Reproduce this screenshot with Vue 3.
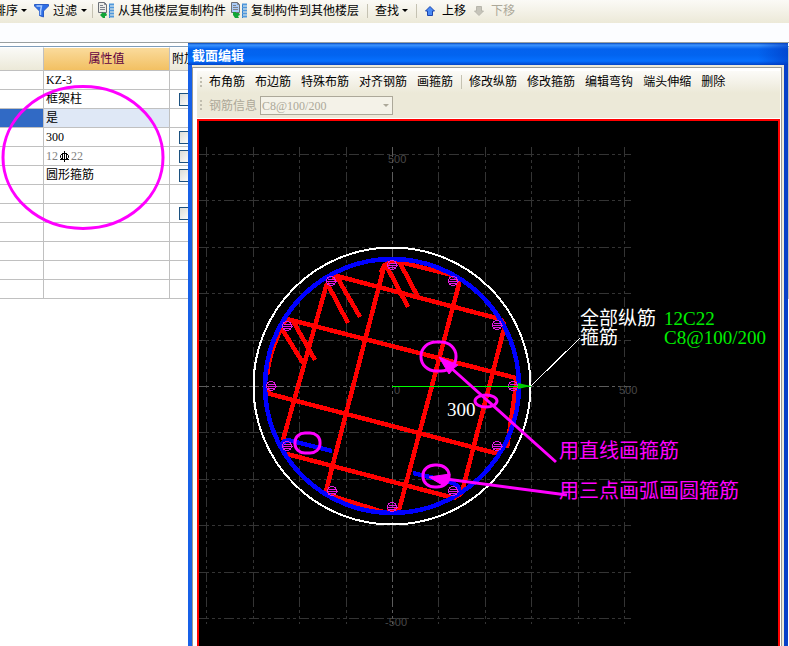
<template>
  <div class="app">
    <div class="toolbar">
      <button class="tool">排序<i class="caret"></i></button>
      <button class="tool filter">
        <svg width="15" height="15" viewBox="0 0 15 15">
          <path d="M0.5 1.5h14v1.5L9.5 8v6l-4 -1.5V8L0.5 3z" fill="#2f6fe6" stroke="#2a5cc4" />
          <path d="M2.5 3h5l-1 5v4" fill="none" stroke="#a9ccff" stroke-width="1.5" />
        </svg>
        过滤<i class="caret"></i>
      </button>
      <i class="sep"></i>
      <button v-for="item in copyTools" :key="item.text" class="tool copy">
        <svg width="17" height="17" viewBox="0 0 17 17">
          <path d="M0.5 0.5h6l2 2v8h-8z" :fill="item.paper" stroke="#6c7078" />
          <path d="M6.5 0.5v2h2M2 3.5h3M2 5.5h5M2 7.5h5" fill="none" stroke="#7c828c" />
          <path d="M11.5 3v13" stroke="#2470c0" />
          <path d="M11 2.5h5M11 5.5h5M11 8.5h5M11 11.5h5M11 14.5h5" stroke="#4f98dc" stroke-width="2" />
          <path :d="item.arrow" fill="#13a538" />
        </svg>
        {{ item.text }}
      </button>
      <i class="sep"></i>
      <button class="tool find">查找<i class="caret"></i></button>
      <i class="sep"></i>
      <button class="tool move">
        <svg width="10" height="10" viewBox="0 0 10 10">
          <path d="M5 0.5L9.5 5H7.5V9.5H2.5V5H0.5z" fill="#4a8af4" stroke="#1d45ae" />
        </svg>
        上移
      </button>
      <button class="tool move" disabled>
        <svg width="10" height="10" viewBox="0 0 10 10">
          <path d="M5 9.5L9.5 5H7.5V0.5H2.5V5H0.5z" fill="#c6c4ba" stroke="#b8b6ac" />
        </svg>
        下移
      </button>
    </div>

    <div class="property-panel">
      <table class="property-table">
        <colgroup>
          <col class="col-name" />
          <col class="col-value" />
          <col />
        </colgroup>
        <thead>
          <tr>
            <th></th>
            <th class="value-head">属性值</th>
            <th class="extra-head">附加</th>
          </tr>
        </thead>
        <tbody>
          <tr v-for="(row, i) in rows" :key="i" :class="{ selected: row.selected }">
            <td></td>
            <td v-if="row.rebar" class="value muted">
              12
              <svg class="rebar-sign" width="9" height="11" viewBox="0 0 9 11">
                <path d="M4.5 0v11M2.5 2.5h4l2 2v2l-2 2h-4l-2-2v-2zM0 8.5h9M2.5 2v6M6.5 2v6" fill="none" stroke="#000" />
              </svg>
              22
            </td>
            <td v-else class="value">{{ row.value }}</td>
            <td class="extra">
              <input v-if="row.check" type="checkbox" aria-label="附加" />
            </td>
          </tr>
        </tbody>
      </table>
      <svg class="mark" width="168" height="148" viewBox="0 0 168 148">
        <ellipse cx="83" cy="73.5" rx="80" ry="71" fill="none" stroke="#f0f" stroke-width="3" />
      </svg>
    </div>

    <section class="window">
      <header class="title-bar">截面编辑</header>
      <div class="window-body">
        <div class="tool-row">
          <i class="grip"></i>
          <button v-for="t in drawTools" :key="t">{{ t }}</button>
          <i class="sep"></i>
          <button v-for="t in editTools" :key="t">{{ t }}</button>
        </div>
        <div class="tool-row info-row">
          <i class="grip"></i>
          <label for="rebar-info">钢筋信息</label>
          <span class="combo">
            <select id="rebar-info" disabled>
              <option>C8@100/200</option>
            </select>
            <i class="caret"></i>
          </span>
        </div>
        <div class="canvas">
          <svg width="100%" height="100%">
            <!-- 原点为柱截面圆心 -->
            <g transform="translate(193 265)">
              <g class="grid">
                <path v-for="x in gridX" :key="'x' + x" :d="`M${x} -239V238`" :class="{ axis: x === 0 }" />
                <path v-for="y in gridY" :key="'y' + y" :d="`M-193 ${y}H239`" :class="{ axis: y === 0 }" />
              </g>
              <g class="axis-text">
                <text x="-4" y="-223">500</text>
                <text x="-7" y="240">-500</text>
                <text x="227" y="8">500</text>
                <text x="2" y="8">0</text>
              </g>

              <circle class="outline" r="138.5" />
              <path v-for="d in stirrups" :key="d" class="stirrup" :d="d" />
              <g class="round-stirrup">
                <circle r="127" />
                <path d="M-111 60Q-109 53 -100 55L-60 65" />
                <path d="M21 87L58 96Q68 99 67 107" />
              </g>
              <g v-for="(b, i) in bars" :key="i" class="bar" :transform="`translate(${b.x} ${b.y})`">
                <circle r="4.5" />
                <path d="M-3 -2H4M-5 0H6M-3 2H4" />
              </g>

              <path class="leader" d="M139 0L188 -48" />
              <path class="radius" d="M0 0H139" />
              <path class="radius-head" d="M126 -3L139 0L126 3z" />

              <g class="canvas-text">
                <text x="55" y="30">300</text>
                <text x="188" y="-61">全部纵筋</text>
                <text x="188" y="-42">箍筋</text>
                <text class="green" x="272" y="-61">12C22</text>
                <text class="green" x="272" y="-42">C8@100/200</text>
              </g>

              <g class="note">
                <rect x="29" y="-44" width="35" height="29" rx="15" ry="14" />
                <ellipse cx="94" cy="15" rx="11" ry="6" />
                <rect x="-97" y="47" width="25" height="20" rx="10" ry="9" />
                <rect x="31" y="79" width="26" height="22" rx="12" ry="10" />
                <path d="M58 -19L164 76M54 93L175 109" />
                <path class="head" d="M47 -29L66 -21L62 -18L57 -12zM37 91L58 88L57 94L52 100z" />
                <text x="167" y="72">用直线画箍筋</text>
                <text x="167" y="112">用三点画弧画圆箍筋</text>
              </g>
            </g>
          </svg>
        </div>
      </div>
    </section>
  </div>
</template>

<script setup>
const copyTools = [
  { text: "从其他楼层复制构件", paper: "#ecece8", arrow: "M2 13l3-3v1h3l1 2-1 1H7v2H5z" },
  { text: "复制构件到其他楼层", paper: "#a9cbf7", arrow: "M2 10h3v1h3l1 2-2 1 1 2H4l-2-3z" },
];

const rows = [
  { value: "KZ-3" },
  { value: "框架柱", check: true },
  { value: "是", selected: true },
  { value: "300", check: true },
  { rebar: true, check: true },
  { value: "圆形箍筋", check: true },
  {},
  { check: true },
  {},
  {},
  {},
  {},
];

const drawTools = ["布角筋", "布边筋", "特殊布筋", "对齐钢筋", "画箍筋"];
const editTools = ["修改纵筋", "修改箍筋", "编辑弯钩", "端头伸缩", "删除"];

// 网格线
const gridStep = 46.4;
const range = (from, to) =>
  Array.from({ length: to - from + 1 }, (_, i) => Math.round((from + i) * gridStep));
const gridX = range(-4, 5);
const gridY = range(-5, 5);

// 纵筋均布 12 根
const bars = Array.from({ length: 12 }, (_, i) => {
  const a = (i * Math.PI) / 6;
  return { x: Math.round(Math.cos(a) * 121), y: Math.round(Math.sin(a) * 121) };
});

// 直线箍筋和弯钩
const stirrups = [
  "M-109 -63L-105 -67L124 -8V0L115 62",
  "M-59 -106L-55 -110L104 -68Q113 -66 112 -57L70 106",
  "M-11 -114Q-8 -124 3 -125L8 -124L60 -111Q68 -109 67 -102L7 124L-7 126",
  "M-7 -123L-66 105Q-65 109 -60 110L-9 126",
  "M-65 -103L-109 54",
  "M-110 -59Q-122 -36 -125 -11",
  "M-125 2L-122 8L103 67L111 62",
  "M-105 68L62 112L70 107",
  "M-65 -103L-44 -63",
  "M-55 -109L-32 -69",
  "M-110 -57L-89 -23",
  "M-99 -65L-77 -26",
  "M-6 -121L16 -79",
  "M8 -123L27 -87",
];
</script>

<style>
body {
  background: #fff;
  overflow: hidden;
}
</style>

<style scoped>
.app {
  position: relative;
  display: flex;
  flex-direction: column;
  height: 100vh;
  overflow: hidden;
  background: #fcfdff;
  font-family: "Liberation Serif", "Noto Sans CJK SC", serif;
  font-size: 12px;
  color: #000;
}

button {
  border: 0;
  padding: 0;
  background: none;
  font: inherit;
  color: inherit;
  white-space: nowrap;
}

svg {
  flex: none;
}

.toolbar {
  flex: none;
  display: flex;
  align-items: center;
  height: 23px;
  padding-bottom: 2px;
  box-sizing: border-box;
  margin-left: -6px;
  background: linear-gradient(#fbfaf6, #ece9d8);
}

.tool {
  display: flex;
  align-items: center;
  line-height: 18px;
}

.tool:disabled {
  color: #aca899;
}

.caret {
  flex: none;
  margin-left: 3px;
  border: 3px solid transparent;
  border-top-color: currentColor;
  border-bottom: 0;
}

.filter {
  gap: 4px;
  margin-left: 7px;
}

.filter .caret {
  margin-left: 0;
}

.sep {
  flex: none;
  width: 1px;
  height: 14px;
  background: #c5c2b2;
}

.filter + .sep {
  margin-left: 5px;
}

.copy {
  gap: 3px;
  margin-left: 5px;
}

.copy + .sep {
  margin-left: 8px;
}

.find {
  margin: 0 8px 0 7px;
}

.move {
  gap: 7px;
  margin-left: 8px;
}

.property-panel {
  flex: 1;
  position: relative;
  margin-top: 19px;
  border-top: 1px solid #9aa0a0;
  padding-top: 3px;
  background: #fff;
}

.property-table {
  width: 100%;
  table-layout: fixed;
  border-collapse: separate;
  border-spacing: 0;
  border-top: 1px solid #7f9db9;
}

.col-name {
  width: 44px;
}

.col-value {
  width: 126px;
}

th,
td {
  box-sizing: border-box;
  height: 19px;
  padding: 0;
  border-right: 1px solid #c0c0c0;
  border-bottom: 1px solid #c0c0c0;
  line-height: 18px;
  white-space: nowrap;
  text-align: left;
}

th {
  height: 24px;
  border-top: 1px solid #fff;
  background: linear-gradient(#fafaf7, #ece9d8);
  font-weight: normal;
}

.value-head {
  text-align: center;
  color: #600040;
  background: linear-gradient(#fadb9c, #f2c062);
}

.extra-head {
  padding-left: 2px;
}

.value {
  padding-left: 2px;
}

.muted {
  color: #808080;
}

.rebar-sign {
  margin: 0 -1px;
  vertical-align: -2px;
}

.selected td:first-child {
  background: #316ac5;
}

.selected .value {
  background: #dfe8f6;
}

.extra {
  padding-left: 9px;
}

.extra input {
  display: block;
  appearance: none;
  width: 13px;
  height: 13px;
  margin: 0;
  border: 1px solid #1c5180;
  background: linear-gradient(135deg, #dcdcd7, #fff);
}

/* 批注圈 */
.mark {
  position: absolute;
  top: 41px;
  left: 0;
}

.window {
  position: absolute;
  top: 43px;
  left: 188px;
  right: 1px;
  bottom: 0;
  display: flex;
  flex-direction: column;
  border: solid #0a50dc;
  border-width: 0 4px;
  border-left-color: #1660e8;
  border-right-color: #0840c8;
  background: #ece9d8;
}

.title-bar {
  height: 22px;
  margin: 0 -4px;
  padding-left: 4px;
  background:
    linear-gradient(90deg, transparent calc(100% - 30px), #0038c0a0),
    linear-gradient(#0a48b8, #3c94ff 2px, #0462ee 6px, #0264f0 12px, #0670ff 18px, #0244c8);
  font-size: 13px;
  font-weight: bold;
  line-height: 26px;
  color: #fff;
}

.window-body {
  flex: 1;
  display: flex;
  flex-direction: column;
  margin: 2px 2px 0 0;
  border: 1px solid #9a9a94;
  border-bottom: 0;
  padding: 3px 1px 0 4px;
  background: #fff;
}

.tool-row {
  display: flex;
  align-items: center;
  gap: 10px;
  height: 22px;
  padding-left: 3px;
  background: linear-gradient(#fcfbf8, #ece9d8);
  line-height: 18px;
}

.tool-row .sep {
  margin: 0 -3px 0 -2px;
}

.grip {
  flex: none;
  width: 2px;
  height: 11px;
  margin-right: -3px;
  background: repeating-linear-gradient(#c1beb0 0 2px, transparent 2px 4px);
}

.info-row {
  height: 25px;
  gap: 3px;
  background: #ece9d8;
  color: #aca899;
}

.info-row .grip {
  margin-right: 4px;
}

.combo {
  position: relative;
  display: flex;
}

select {
  appearance: none;
  width: 133px;
  height: 19px;
  margin: 0;
  border: 1px solid #aca899;
  border-radius: 0;
  padding: 0 16px 0 1px;
  background: #f4f2e8;
  font: inherit;
  color: #aca899;
  opacity: 1;
}

.combo .caret {
  position: absolute;
  top: 8px;
  right: 4px;
}

.canvas {
  flex: 1;
  min-height: 0;
  border: 2px solid #f00;
  border-bottom: 0;
  margin-top: 1px;
  background: #000;
}

.canvas svg {
  display: block;
}

.canvas path,
.canvas circle,
.canvas rect,
.canvas ellipse {
  fill: none;
}

.grid path {
  stroke: #343434;
  stroke-dasharray: 10 3 3 3 3 3;
  shape-rendering: crispEdges;
}

.grid .axis {
  stroke: #5c5c5c;
}

.axis-text {
  fill: #484848;
  font: 11px "Liberation Sans", sans-serif;
}

.canvas .outline {
  stroke: #fff;
  stroke-width: 2;
  shape-rendering: crispEdges;
}

.canvas .stirrup {
  stroke: #f00;
  stroke-width: 4.5;
  shape-rendering: crispEdges;
}

.round-stirrup {
  stroke: #00f;
  stroke-width: 4.5;
  shape-rendering: crispEdges;
}

.bar {
  stroke: #e01ce0;
  stroke-width: 1;
  shape-rendering: crispEdges;
}

.leader {
  stroke: #fff;
  shape-rendering: crispEdges;
}

.radius {
  stroke: #0f0;
  shape-rendering: crispEdges;
}

.canvas .radius-head {
  fill: #0c0;
}

.canvas-text {
  fill: #fff;
  font-size: 19px;
}

.canvas-text .green {
  fill: #0e0;
}

.note {
  stroke: #f0f;
  stroke-width: 3;
}

.canvas .note .head {
  fill: #f0f;
  stroke-width: 1;
}

.note text {
  fill: #f0f;
  stroke: none;
  font-size: 20px;
}
</style>
